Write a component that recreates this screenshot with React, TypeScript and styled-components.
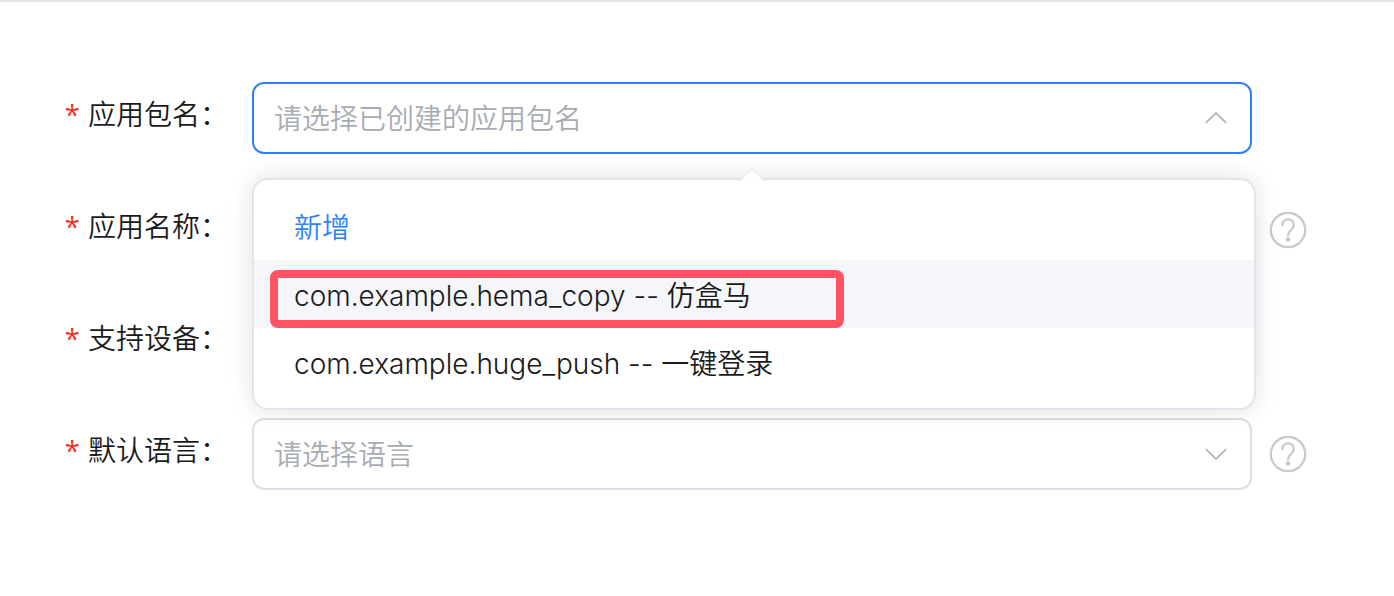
import React from "react";
import styled, { createGlobalStyle } from "styled-components";

const GlobalStyle = createGlobalStyle`
  *, *::before, *::after { box-sizing: border-box; }
  body {
    margin: 0;
    background: #ffffff;
    color: #1a1a1a;
    font-family: Inter, "Noto Sans CJK SC", sans-serif;
    font-size: 28px;
    font-weight: 350;
  }
`;

const Page = styled.main`
  border-top: 2px solid #e4e4e4;
  padding: 80px 88px 80px 0;
`;

const Form = styled.form`
  display: grid;
  gap: 40px;
`;

const Row = styled.div`
  display: grid;
  grid-template-columns: 228px minmax(0, 1fr) 36px;
  column-gap: 24px;
  min-height: 72px;
`;

const Label = styled.label`
  line-height: 64px;
  text-align: right;
  white-space: nowrap;
`;

const Required = styled.span`
  margin-right: 8px;
  color: #f0362e;
  font-family: "Open Sans", sans-serif;
  font-weight: 400;
`;

const Control = styled.div`
  position: relative;
  display: flex;
  align-items: center;
  margin-right: -6px;
  height: 72px;
`;

const Field = styled.select<{ $active?: boolean }>`
  appearance: none;
  width: 100%;
  height: 72px;
  padding: 2px 64px 0 20px;
  border: 2px solid ${(p) => (p.$active ? "#2f80f7" : "#dcdfe6")};
  border-radius: 12px;
  outline: none;
  background: #ffffff;
  color: #a8abb2;
  font: inherit;
`;

const TextField = styled.input`
  width: 100%;
  height: 72px;
  padding: 0 20px;
  border: 2px solid #dcdfe6;
  border-radius: 12px;
  font: inherit;
`;

const Arrow = styled.svg<{ $up?: boolean }>`
  position: absolute;
  right: 24px;
  width: 24px;
  height: 24px;
  pointer-events: none;
  transform: ${(p) => (p.$up ? "rotate(180deg)" : "none")};
`;

const Menu = styled.ul`
  position: absolute;
  z-index: 2;
  top: 96px;
  left: 0;
  right: -4px;
  margin: 0;
  padding: 12px 0;
  list-style: none;
  border: 2px solid #e4e4ec;
  border-radius: 16px;
  background: #ffffff;
  box-shadow: 0 0 24px rgba(0, 0, 0, 0.12);

  &::before {
    content: "";
    position: absolute;
    top: -9px;
    left: calc(50% - 12px);
    width: 20px;
    height: 20px;
    border: 2px solid #ebebf0;
    border-right-color: transparent;
    border-bottom-color: transparent;
    border-top-left-radius: 4px;
    background: #ffffff;
    transform: rotate(45deg);
  }
`;

const MenuItem = styled.li`
  position: relative;
`;

const Option = styled.button<{ $tone?: "link"; $hover?: boolean }>`
  display: block;
  width: 100%;
  height: 68px;
  padding: 0 40px;
  border: 0;
  background: ${(p) => (p.$hover ? "#f5f6fa" : "transparent")};
  color: ${(p) => (p.$tone === "link" ? "#2f80f7" : "inherit")};
  font: inherit;
  text-align: left;
  white-space: nowrap;
  cursor: pointer;
`;

const Highlight = styled.span`
  position: absolute;
  top: 10px;
  bottom: 0;
  left: 16px;
  width: 574px;
  border: 8px solid #ff5263;
  border-radius: 8px;
  pointer-events: none;
`;

const HelpButton = styled.button`
  align-self: center;
  justify-self: end;
  width: 36px;
  height: 36px;
  padding: 0;
  border: 0;
  background: none;
  cursor: pointer;

  svg { display: block; overflow: visible; }
`;

function Chevron({ up }: { up?: boolean }) {
  return (
    <Arrow $up={up} viewBox="0 0 24 24" fill="none" stroke="#a8abb2" strokeWidth="1.7" strokeLinecap="round" strokeLinejoin="round" aria-hidden="true">
      <path d="M2.3 7.5 12 17l9.700-9.500" />
    </Arrow>
  );
}

function Help() {
  return (
    <HelpButton type="button" aria-label="帮助">
      <svg width="36" height="36" viewBox="0 0 36 36" fill="none" stroke="#c9c9c9" strokeWidth="2.300" strokeLinecap="round">
        <circle cx="18" cy="18" r="17.200" />
        <path d="M12.400 13.200c0-3.400 2.500-5.900 5.700-5.900s5.800 2.300 5.800 5.500c0 2.300-1.200 3.700-2.900 5.200-1.900 1.700-3 2.700-3 5.400" />
        <circle cx="18" cy="27.500" r="2.300" fill="#c9c9c9" stroke="none" />
      </svg>
    </HelpButton>
  );
}

function FieldLabel({ id, text }: { id: string; text: string }) {
  return (
    <Label htmlFor={id}>
      <Required>*</Required>
      {text}：
    </Label>
  );
}

export default function App() {
  return (
    <>
      <GlobalStyle />
      <Page>
        <Form>
          <Row>
            <FieldLabel id="package" text="应用包名" />
            <Control>
              <Field id="package" $active defaultValue="">
                <option value="">请选择已创建的应用包名</option>
              </Field>
              <Chevron up />
              <Menu>
                <MenuItem>
                  <Option type="button" $tone="link">新增</Option>
                </MenuItem>
                <MenuItem>
                  <Option type="button" $hover>com.example.hema_copy -- 仿盒马</Option>
                  <Highlight />
                </MenuItem>
                <MenuItem>
                  <Option type="button">com.example.huge_push -- 一键登录</Option>
                </MenuItem>
              </Menu>
            </Control>
          </Row>
          <Row>
            <FieldLabel id="name" text="应用名称" />
            <Control>
              <TextField id="name" type="text" />
            </Control>
            <Help />
          </Row>
          <Row>
            <FieldLabel id="device" text="支持设备" />
            <Control>
              <input id="device" type="checkbox" />
            </Control>
          </Row>
          <Row>
            <FieldLabel id="language" text="默认语言" />
            <Control>
              <Field id="language" defaultValue="">
                <option value="">请选择语言</option>
              </Field>
              <Chevron />
            </Control>
            <Help />
          </Row>
        </Form>
      </Page>
    </>
  );
}
